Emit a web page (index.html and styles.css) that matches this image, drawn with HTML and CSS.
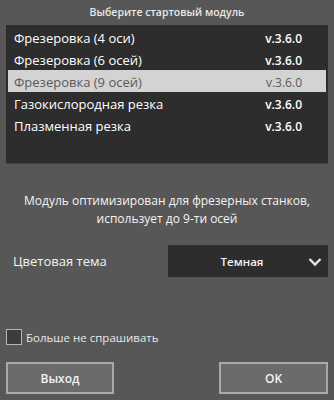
FILE: index.html
```html
<!DOCTYPE html>
<html lang="ru">
<head>
    <meta charset="UTF-8">
    <meta name="viewport" content="width=device-width, initial-scale=1.0">
    <title>Выберите стартовый модуль</title>
    <link rel="stylesheet" href="styles.css">
</head>
<body>
    <div class="dialog">
        <div class="dialog-title">Выберите стартовый модуль</div>

        <div class="module-list">
            <div class="module-row">
                <span class="module-name">Фрезеровка (4 оси)</span>
                <span class="module-version">v.3.6.0</span>
            </div>
            <div class="module-row">
                <span class="module-name">Фрезеровка (6 осей)</span>
                <span class="module-version">v.3.6.0</span>
            </div>
            <div class="module-row selected">
                <span class="module-name">Фрезеровка (9 осей)</span>
                <span class="module-version">v.3.6.0</span>
            </div>
            <div class="module-row">
                <span class="module-name">Газокислородная резка</span>
                <span class="module-version">v.3.6.0</span>
            </div>
            <div class="module-row">
                <span class="module-name">Плазменная резка</span>
                <span class="module-version">v.3.6.0</span>
            </div>
        </div>

        <div class="description">
            Модуль оптимизирован для фрезерных станков,<br>
            использует до 9-ти осей
        </div>

        <div class="theme-row">
            <span class="theme-label">Цветовая тема</span>
            <div class="theme-select">
                <span class="theme-value">Темная</span>
                <svg class="chevron" width="14" height="10" viewBox="0 0 14 10">
                    <path d="M1.5 2 L7 7.5 L12.5 2" fill="none" stroke="#e6e6e6" stroke-width="2.4"/>
                </svg>
            </div>
        </div>

        <label class="ask-again">
            <span class="checkbox"></span>
            Больше не спрашивать
        </label>

        <div class="buttons">
            <button class="btn">Выход</button>
            <button class="btn">OK</button>
        </div>
    </div>
</body>
</html>
```

FILE: styles.css
```css
body {
    margin: 0;
    padding: 0;
    background-color: #575757;
    font-family: "Open Sans", "Noto Sans", Arial, sans-serif;
    font-size: 12px;
    color: #f2f2f2;
}

.dialog {
    width: 334px;
    height: 400px;
    padding: 0 6px;
    box-sizing: border-box;
}

.dialog-title {
    height: 25px;
    line-height: 24px;
    text-align: center;
    font-size: 10.5px;
    font-weight: 600;
    color: #e8e8e8;
}

.module-list {
    height: 139px;
    background-color: #2d2d2d;
    border-bottom: 1px solid #444;
    padding: 1px 2px 0 2px;
    box-sizing: border-box;
}

.module-row {
    display: flex;
    justify-content: space-between;
    height: 22px;
    line-height: 25px;
    padding: 0 24px 0 6px;
    font-size: 13px;
    font-weight: 500;
    color: #ffffff;
}

.module-row.selected {
    background-color: #d3d3d3;
    color: #5a5a5a;
    font-weight: 400;
}

.module-version {
    font-size: 12px;
    font-weight: 600;
}

.module-row.selected .module-version {
    font-weight: 400;
}

.description {
    margin-top: 28px;
    text-align: center;
    line-height: 18px;
    color: #f4f4f4;
}

.theme-row {
    display: flex;
    align-items: center;
    justify-content: space-between;
    margin-top: 17px;
}

.theme-label {
    padding-left: 7px;
    font-size: 13px;
    font-weight: 500;
}

.theme-select {
    width: 160px;
    height: 32px;
    background-color: #2d2d2d;
    display: flex;
    align-items: center;
    justify-content: center;
    position: relative;
}

.theme-value {
    margin-left: -12px;
    font-size: 11.5px;
    font-weight: 600;
}

.chevron {
    position: absolute;
    right: 6px;
    top: 12px;
}

.ask-again {
    display: flex;
    align-items: center;
    gap: 4px;
    margin-top: 52px;
    height: 16px;
    font-size: 11.5px;
    color: #e8e8e8;
}

.checkbox {
    width: 14px;
    height: 14px;
    border: 1px solid #b5b5b5;
    background-color: #3c3c3c;
}

.buttons {
    display: flex;
    justify-content: space-between;
    margin-top: 17px;
}

.btn {
    width: 108px;
    height: 32px;
    background-color: #6b6b6b;
    border: 2px solid #a9a9a9;
    color: #f2f2f2;
    font-family: inherit;
    font-size: 12px;
    font-weight: 600;
    padding: 0;
}

.btn + .btn {
    width: 109px;
}
```
